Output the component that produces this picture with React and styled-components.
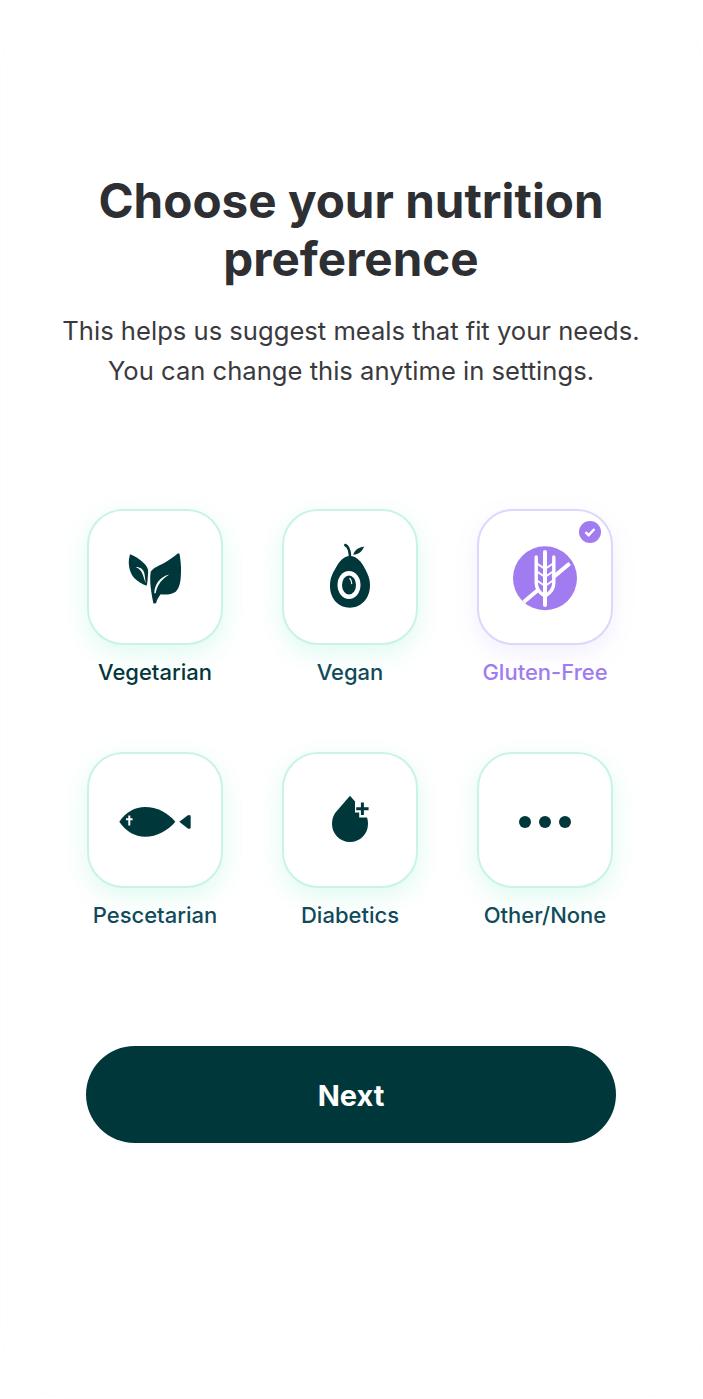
import React from 'react'
import styled, { createGlobalStyle } from 'styled-components'

const GlobalStyle = createGlobalStyle`
  html, body {
    margin: 0;
    padding: 0;
    background: #fff;
  }
  * { box-sizing: border-box; }
`

const DARK = '#00373a'
const PURPLE = '#a07cf0'

function LeafIcon() {
  return (
    <Icon viewBox="31.3 32 72 72">
      <path fill={DARK} d="M42.3 45.3 C47 47 52 50 56 54 C60 58 61 61 60.3 65 C60 69 60 73 59 76.7 C55 75.5 50 72.5 46.5 69 C42 64 40.5 56 41.3 50 Z" />
      <path fill="#fff" d="M48 58 C52 57.8 55.6 60 56.6 64 C57.2 67 57.6 71 58 74.5 C56.8 71 56 68 55 65.5 C53.8 62 51.5 59.5 48 58 Z" />
      <path fill={DARK} d="M90.3 44.3 C91.6 44.3 92 45 92.2 47 C93.5 55 93.6 63 93 69 C92.5 75 91 80 88 82.7 C84 85.5 78 86 73 85.3 C71 88 69 91 68.4 94.3 L65.7 94.6 C65 91 64.2 87 63.6 83 C62.6 76 62 69 63 62.7 C66 58.5 71 57 76 54.3 C81 51.5 86 48 90.3 44.3 Z" />
      <path fill="#fff" d="M66.6 84.5 C66.6 76 72 67.8 81.6 65.6 C74.5 69.8 69.8 75.5 68 84 Z" />
    </Icon>
  )
}

function AvocadoIcon() {
  return (
    <Icon viewBox="31.3 32 72 72">
      <path fill="none" stroke={DARK} strokeWidth="2.6" strokeLinecap="round" d="M62.6 36 C65.6 37.5 67.2 41 67.3 48" />
      <path fill={DARK} d="M70.5 45.8 C72 41 76 38.4 81.4 37.6 C80 42 76 45.6 70.5 45.8 Z" />
      <path fill={DARK} d="M67.3 47 C74 47 79 53 82.5 60 C85.5 66 87.3 70 87.3 76 C87.3 91 77 98.7 67.3 98.7 C56 98.7 47.3 90 47.3 77 C47.3 69 50 64 53 59 C56.5 53 60.5 47 67.3 47 Z" />
      <ellipse cx="66.3" cy="76" rx="11.5" ry="14" fill="#fff" />
      <ellipse cx="66.3" cy="76" rx="7" ry="9.5" fill={DARK} />
      <path fill="none" stroke="#fff" strokeWidth="1.2" strokeLinecap="round" d="M67.2 69.5 C68.6 71 69 72.6 69 74.6" />
    </Icon>
  )
}

function WheatIcon() {
  return (
    <Icon viewBox="31.3 32 72 72">
      <circle cx="67.3" cy="69.3" r="32" fill={PURPLE} />
      <g fill="none" stroke="#fff" strokeLinejoin="round">
        <path strokeWidth="4" d="M46 93 L60 81.2 M75 68.6 L92 54.5" />
        <path strokeWidth="4" strokeLinecap="round" d="M67.3 43 L67.3 96" />
        <path strokeWidth="3.4" strokeLinecap="round" d="M58.5 48 L58.5 74 C58.5 80 62 84 67 87" />
        <path strokeWidth="3.4" strokeLinecap="round" d="M76.1 48 L76.1 74 C76.1 80 72.6 84 67.6 87" />
        <path strokeWidth="2" d="M58.5 54 L67.3 60 L76.1 54" />
        <path strokeWidth="2" d="M58.5 62 L67.3 68 L76.1 62" />
        <path strokeWidth="2" d="M58.5 71 L67.3 77 L76.1 71" />
      </g>
    </Icon>
  )
}

function FishIcon() {
  return (
    <Icon viewBox="32 32 72 72">
      <path fill={DARK} d="M32.3 69.7 C39 60 48 55 58 55 C70 55 81 61 88.3 69.7 C81 78.5 70 84.7 58 84.7 C48 84.7 39 79.5 32.3 69.7 Z" />
      <path fill={DARK} d="M92.3 69.7 L100.5 63.4 C102.6 62.2 103.7 63.2 103.7 65 L103.7 75 C103.7 76.8 102.6 77.4 100.5 76.2 Z" />
      <path fill="none" stroke="#fff" strokeWidth="2" d="M42.3 63.6 L42.3 73.4 M39 67.3 L45.6 67.3" />
    </Icon>
  )
}

function DropIcon() {
  return (
    <Icon viewBox="31.3 32 72 72">
      <path fill={DARK} d="M67.3 43.7 L82.2 61 C84.4 64.5 85.3 68 85.3 72 C85.3 82 77.3 90 67.3 90 C57.3 90 49.3 82 49.3 72 C49.3 68 50.2 64.5 52.4 61 Z" />
      <path fill="#fff" d="M72.3 50 L72.3 60.5 L76.5 60.5 L76.5 65.5 L88 65.5 L90 46 Z" />
      <path fill="none" stroke={DARK} strokeWidth="3" d="M79.7 50.5 L79.7 63 M73.5 56.8 L85.9 56.8" />
    </Icon>
  )
}

function DotsIcon() {
  return (
    <Icon viewBox="32 32 72 72">
      <circle cx="48" cy="70" r="6" fill={DARK} />
      <circle cx="68" cy="70" r="6" fill={DARK} />
      <circle cx="88" cy="70" r="6" fill={DARK} />
    </Icon>
  )
}

const options = [
  { label: 'Vegetarian', icon: <LeafIcon />, strong: true },
  { label: 'Vegan', icon: <AvocadoIcon /> },
  { label: 'Gluten-Free', icon: <WheatIcon />, selected: true },
  { label: 'Pescetarian', icon: <FishIcon /> },
  { label: 'Diabetics', icon: <DropIcon /> },
  { label: 'Other/None', icon: <DotsIcon /> },
]

export default function App() {
  return (
    <Page>
      <GlobalStyle />
      <Title>Choose your nutrition preference</Title>
      <Subtitle>
        This helps us suggest meals that fit your needs.
        <br />
        You can change this anytime in settings.
      </Subtitle>

      <Options>
        {options.map((item) => (
          <Option key={item.label}>
            <Card $selected={item.selected}>
              {item.icon}
              {item.selected && (
                <Badge>
                  <svg width="12" height="12" viewBox="0 0 12 12">
                    <path d="M1.5 6.2 L4.6 9.2 L10.5 3" fill="none" stroke="#fff" strokeWidth="2.4" />
                  </svg>
                </Badge>
              )}
            </Card>
            <Label $selected={item.selected} $strong={item.strong}>{item.label}</Label>
          </Option>
        ))}
      </Options>

      <NextButton>Next</NextButton>
    </Page>
  )
}

const Page = styled.div`
  width: 703px;
  height: 1399px;
  padding: 171px 86px 0 85px;
  background: #fff;
  border-radius: 70px;
  border: 1px solid #fdfdfd;
  display: flex;
  flex-direction: column;
  align-items: center;
  font-family: Inter, "Liberation Sans", sans-serif;
`

const Title = styled.h1`
  margin: 0 -40px;
  font-size: 47.6px;
  line-height: 58px;
  font-weight: 700;
  color: #2d2f33;
  text-align: center;
  width: 560px;
`

const Subtitle = styled.p`
  margin: 23px -40px 0;
  font-size: 25.6px;
  line-height: 40px;
  font-weight: 400;
  color: #3a3a3e;
  text-align: center;
  white-space: nowrap;
`

const Options = styled.div`
  margin-top: 118px;
  width: 100%;
  padding-left: 1px;
  display: grid;
  grid-template-columns: repeat(3, 136px);
  column-gap: 59px;
  row-gap: 67px;
`

const Option = styled.div`
  display: flex;
  flex-direction: column;
  align-items: center;
  gap: 14px;
`

const Card = styled.div`
  position: relative;
  width: 136px;
  height: 136px;
  border-radius: 36px;
  background: #fff;
  border: 2px solid ${(p) => (p.$selected ? '#e0d5fc' : '#c9f4e4')};
  box-shadow: 0 8px 24px ${(p) => (p.$selected ? 'rgba(160, 124, 240, 0.12)' : 'rgba(70, 225, 170, 0.18)')};
  display: flex;
  align-items: center;
  justify-content: center;
`

const Icon = styled.svg`
  width: 72px;
  height: 72px;
  flex-shrink: 0;
`

const Badge = styled.div`
  position: absolute;
  top: 10px;
  right: 10px;
  width: 22px;
  height: 22px;
  border-radius: 50%;
  background: ${PURPLE};
  display: flex;
  align-items: center;
  justify-content: center;
`

const Label = styled.div`
  font-size: 22px;
  line-height: 26px;
  font-weight: ${(p) => (p.$strong ? 500 : 450)};
  white-space: nowrap;
  color: ${(p) => (p.$selected ? PURPLE : p.$strong ? '#02373a' : '#114a5a')};
`

const NextButton = styled.button`
  margin-top: 118px;
  width: 100%;
  height: 97px;
  padding: 2px 0 0;
  border: none;
  border-radius: 49px;
  background: ${DARK};
  color: #fff;
  font-family: Inter, "Liberation Sans", sans-serif;
  font-size: 29px;
  font-weight: 700;
`
